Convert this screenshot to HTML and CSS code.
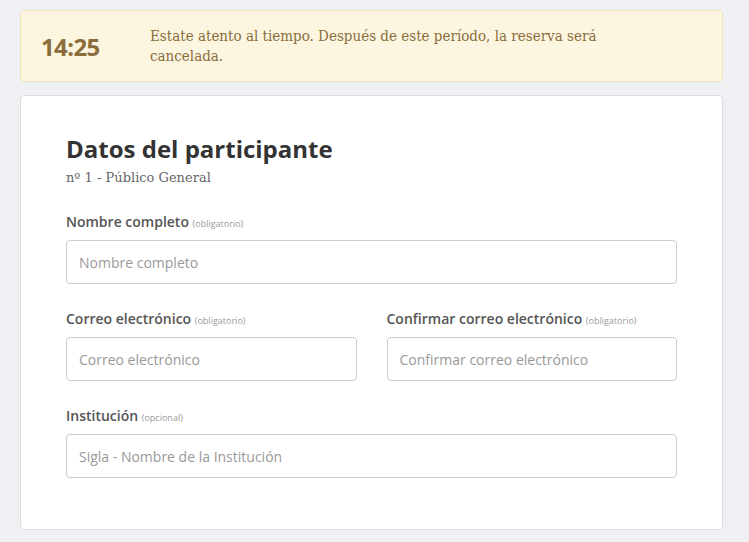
FILE: index.html
```html
<!DOCTYPE html>
<html lang="es">
<head>
<meta charset="utf-8">
<link rel="stylesheet" href="styles.css">
</head>
<body>
<div class="page">
  <div class="timer">
    <div class="time">14:25</div>
    <div class="msg">Estate atento al tiempo. Después de este período, la reserva será cancelada.</div>
  </div>
  <div class="card">
    <h1 class="title">Datos del participante</h1>
    <div class="subtitle">nº 1 - Público General</div>
    <div class="field">
      <label class="label">Nombre completo <small>(obligatorio)</small></label>
      <input class="input" type="text" placeholder="Nombre completo">
    </div>
    <div class="row">
      <div class="field">
        <label class="label">Correo electrónico <small>(obligatorio)</small></label>
        <input class="input" type="text" placeholder="Correo electrónico">
      </div>
      <div class="field">
        <label class="label">Confirmar correo electrónico <small>(obligatorio)</small></label>
        <input class="input" type="text" placeholder="Confirmar correo electrónico">
      </div>
    </div>
    <div class="field">
      <label class="label">Institución <small>(opcional)</small></label>
      <input class="input" type="text" placeholder="Sigla - Nombre de la Institución">
    </div>
  </div>
</div>
</body>
</html>
```
FILE: styles.css
```css
html, body {
  margin: 0;
  padding: 0;
  background: #eef0f4;
}
.page {
  padding: 10px 26px 12px 20px;
  display: flex;
  flex-direction: column;
  gap: 13px;
}
.timer {
  background: #fcf6e1;
  border: 1px solid #efe2b9;
  border-radius: 4px;
  display: flex;
  align-items: center;
  padding: 15px 20px 15px 20px;
  color: #8a6d3b;
}
.time {
  font-family: "Open Sans", sans-serif;
  font-weight: 700;
  font-size: 24px;
  width: 109px;
  letter-spacing: -0.6px;
}
.msg {
  font-family: "DejaVu Serif", serif;
  font-stretch: condensed;
  font-size: 15px;
  line-height: 20px;
  width: 470px;
}
.card {
  background: #fff;
  border: 1px solid #dcdcdc;
  border-radius: 4px;
  padding: 37px 45px 51px 45px;
  display: flex;
  flex-direction: column;
}
.title {
  margin: 0;
  font-family: "Open Sans", sans-serif;
  font-weight: 700;
  font-size: 24px;
  line-height: 32px;
  color: #333;
}
.subtitle {
  font-family: "DejaVu Serif", serif;
  font-size: 13px;
  line-height: 18px;
  color: #666;
  margin-top: 4px;
  margin-bottom: 25px;
}
.row {
  display: flex;
  gap: 30px;
}
.row .field {
  flex: 1;
}
.field {
  display: flex;
  flex-direction: column;
  margin-bottom: 25px;
}
.card > .field:last-child {
  margin-bottom: 0;
}
.label {
  font-family: "Open Sans", sans-serif;
  font-weight: 600;
  font-size: 14px;
  line-height: 20px;
  color: #555;
  margin-bottom: 6px;
}
.label small {
  font-weight: 400;
  font-size: 9px;
  color: #999;
}
.input {
  box-sizing: border-box;
  height: 44px;
  border: 1px solid #cccccc;
  border-radius: 4px;
  padding: 0 12px;
  font-family: "Open Sans", sans-serif;
  font-size: 14px;
  color: #555;
  background: #fff;
  outline: none;
}
.input::placeholder {
  color: #999;
}
```
